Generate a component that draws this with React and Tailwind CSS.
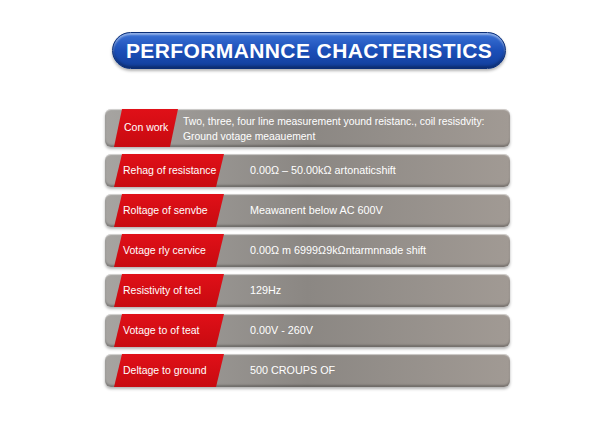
const rows = [
  { label: 'Rehag of resistance', value: '0.00Ω – 50.00kΩ artonaticshift' },
  { label: 'Roltage of senvbe', value: 'Meawanent below AC 600V' },
  { label: 'Votage rly cervice', value: '0.00Ω m 6999Ω9kΩntarmnnade shift' },
  { label: 'Resistivity of tecl', value: '129Hz' },
  { label: 'Votage to of teat', value: '0.00V - 260V' },
  { label: 'Deltage to ground', value: '500 CROUPS OF' },
]

const barCls =
  'flex items-stretch rounded-[6px] overflow-hidden pl-[9px] bg-gradient-to-r from-[#a6a4a1] via-[#8b8783] to-[#a19a94] shadow-[inset_0_1px_1px_rgba(255,255,255,0.55),inset_0_-2px_2px_rgba(0,0,0,0.25),0_2px_3px_rgba(0,0,0,0.3)]'

const redCls =
  'flex items-center bg-gradient-to-b from-[#e01018] to-[#c80a10] text-white [clip-path:polygon(8px_0,100%_0,calc(100%-8px)_100%,0_100%)]'

export default function App() {
  return (
    <div className="w-[600px] h-[422px] bg-white font-['Liberation_Sans',Arial,sans-serif] flex flex-col">
      <div className="mt-[32px] ml-[112px] w-[394px] h-[37px] rounded-full border border-[#0b2f78] bg-gradient-to-b from-[#3b72d6] via-[#1c4fb8] to-[#123f9c] shadow-[inset_0_2px_2px_rgba(255,255,255,0.45),inset_0_-2px_3px_rgba(0,0,0,0.3),0_2px_3px_rgba(0,0,0,0.3)] flex items-center justify-center">
        <span className="text-white font-bold text-[21px] tracking-[0.4px] leading-none">PERFORMANNCE CHACTERISTICS</span>
      </div>

      <div className="mt-[40px] ml-[105px] w-[405px] flex flex-col gap-[7px]">
        <div className={`${barCls} h-[38px]`}>
          <div className={`${redCls} w-[64px] pl-[10px] text-[10.5px]`}>Con work</div>
          <div className="flex-1 pl-[5px] pt-[5px] text-white text-[10.4px] leading-[15px]">
            Two, three, four line measurement yound reistanc., coil resisdvity:
            <br />
            Ground votage meaauement
          </div>
        </div>
        {rows.map((r) => (
          <div key={r.label} className={`${barCls} h-[33px]`}>
            <div className={`${redCls} w-[110px] pl-[9px] text-[10.5px]`}>{r.label}</div>
            <div className="flex-1 flex items-center pl-[26px] text-white text-[10.8px]">{r.value}</div>
          </div>
        ))}
      </div>
    </div>
  )
}
